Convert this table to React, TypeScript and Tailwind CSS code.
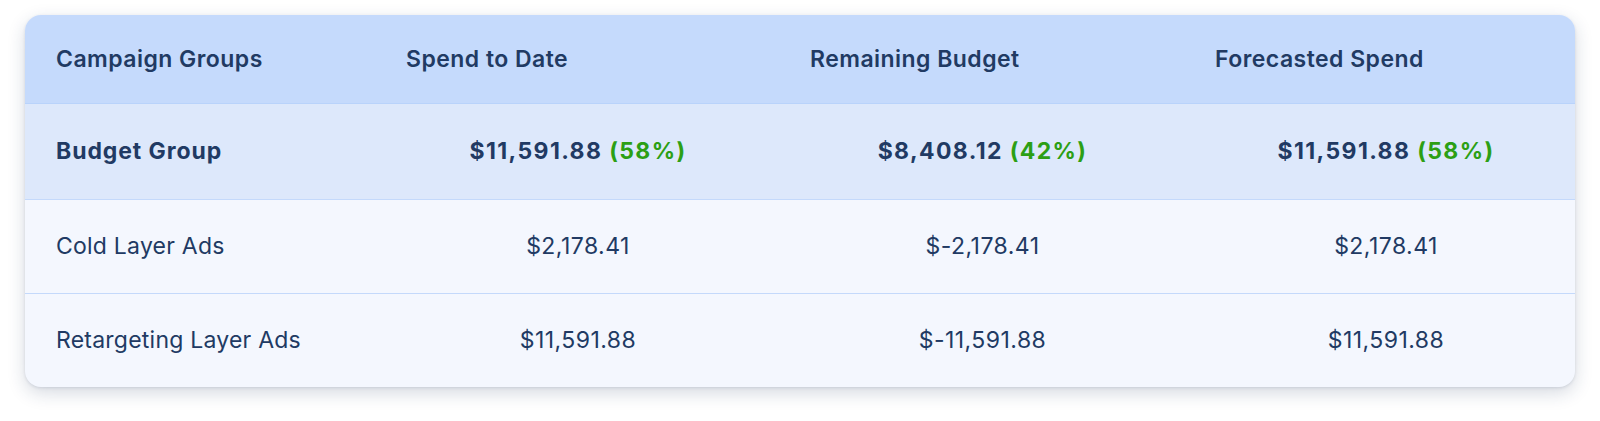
const rows = [
  { name: 'Cold Layer Ads', spend: '$2,178.41', remaining: '$-2,178.41', forecast: '$2,178.41' },
  { name: 'Retargeting Layer Ads', spend: '$11,591.88', remaining: '$-11,591.88', forecast: '$11,591.88' },
];

const cols = 'grid grid-cols-[351px_404px_405px_1fr]';

function Pct({ value, pct }: { value: string; pct: string }) {
  return (
    <span className="tracking-[0.06em]">
      {value} <span className="text-[#2c9f14]">({pct})</span>
    </span>
  );
}

export default function App() {
  return (
    <div
      className="w-[1600px] h-[421px] bg-white pt-[15px] pl-[25px]"
      style={{ fontFamily: 'Inter, "Noto Sans", sans-serif' }}
    >
      <div className="w-[1550px] rounded-2xl overflow-hidden bg-[#f4f7fe] text-[#213a63] text-[23px] shadow-[0_6px_18px_rgba(30,50,90,0.18),0_1px_3px_rgba(30,50,90,0.12)]">
        <div className={`${cols} h-[88px] items-center bg-[#c5dafc] font-semibold tracking-[0.02em]`}>
          <div className="pl-[31px]">Campaign Groups</div>
          <div className="pl-[30px]">Spend to Date</div>
          <div className="pl-[30px]">Remaining Budget</div>
          <div className="pl-[30px]">Forecasted Spend</div>
        </div>
        <div className={`${cols} h-[96px] items-center bg-[#dde8fb] font-bold border-t border-[#b9d3fb]`}>
          <div className="pl-[31px] tracking-[0.04em]">Budget Group</div>
          <div className="text-center">
            <Pct value="$11,591.88" pct="58%" />
          </div>
          <div className="text-center">
            <Pct value="$8,408.12" pct="42%" />
          </div>
          <div className="text-center pl-[12px]">
            <Pct value="$11,591.88" pct="58%" />
          </div>
        </div>
        {rows.map((r) => (
          <div
            key={r.name}
            className={`${cols} h-[94px] items-center border-t border-[#c4d9fb] tracking-[0.01em]`}
          >
            <div className="pl-[31px]">{r.name}</div>
            <div className="text-center tracking-[0.02em]">{r.spend}</div>
            <div className="text-center tracking-[0.02em]">{r.remaining}</div>
            <div className="text-center pl-[12px] tracking-[0.02em]">{r.forecast}</div>
          </div>
        ))}
      </div>
    </div>
  );
}
